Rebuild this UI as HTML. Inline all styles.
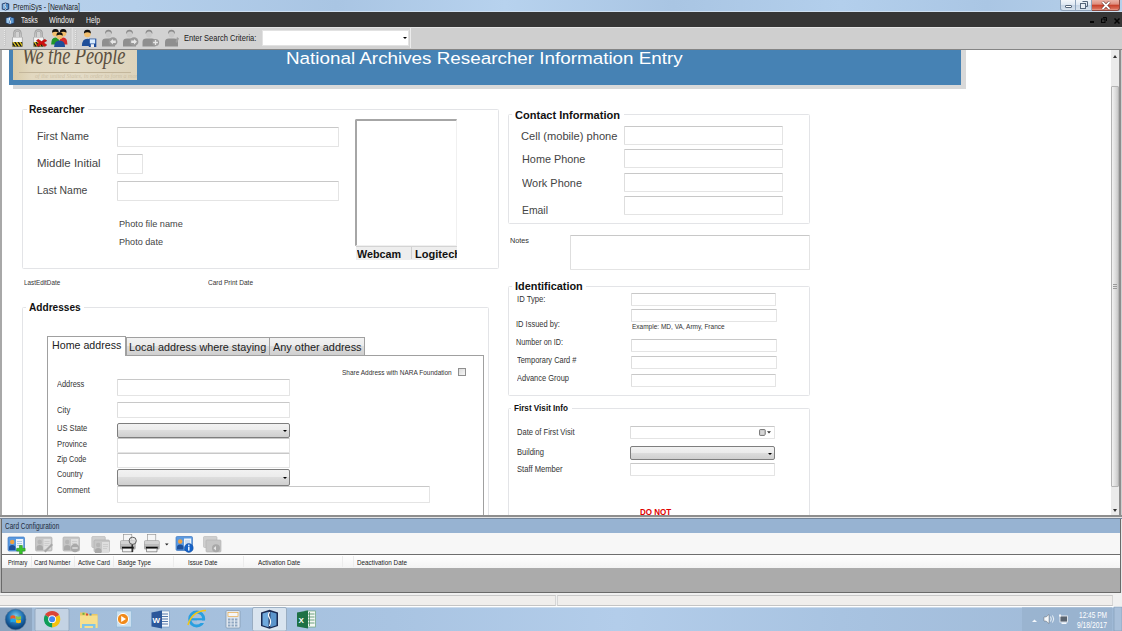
<!DOCTYPE html><html><head><meta charset="utf-8"><style>
html,body{margin:0;padding:0;width:1122px;height:631px;overflow:hidden;background:#fff;position:relative;font-family:'Liberation Sans',sans-serif;}
.r{position:absolute;}
.t{position:absolute;white-space:nowrap;line-height:1;transform-origin:0 0;}
</style></head><body>
<div class="r" style="left:0px;top:0px;width:1122px;height:12px;background:linear-gradient(90deg,#b8d0ea 0%,#b4cfeb 12%,#a9c5e3 30%,#b7d2ee 45%,#a9c5e3 60%,#b3cfec 75%,#aac6e4 88%,#b6d0ea 100%);"></div>
<div class="r" style="left:0px;top:11px;width:1122px;height:1px;background:#cfe0f1;"></div>
<svg class="r" style="left:1px;top:2px" width="9" height="9" viewBox="0 0 9 9"><path d="M0.8 1.8 L4.5 0.4 L8.2 1.8 V7.2 L4.5 8.6 L0.8 7.2Z" fill="#1b2f5c"/><path d="M1.6 2.3 L4.1 1.5 V7.6 L1.6 6.8Z" fill="#7fb3e0"/><path d="M4.9 1.5 L7.4 2.3 V6.8 L4.9 7.6Z" fill="#4d8cc8"/><path d="M4.6 1.4 q-1.2 1.8 0 3.4 q1 1.6 -0.2 3" stroke="#fff" stroke-width="0.9" fill="none"/></svg>
<div class="t" style="left:12.7px;top:2.88px;font-size:8.5px;color:#1e1e1e;transform:scaleX(0.797);">PremiSys - [NewNara]</div>
<div class="r" style="left:1060px;top:0px;width:16px;height:11px;box-sizing:border-box;border:1px solid #8ea3bb;border-top:none;border-radius:0 0 0 3px;background:linear-gradient(#f3f6fa,#dfe8f2 45%,#c7d5e5 55%,#d6e2ee 100%);"></div>
<div class="r" style="left:1076px;top:0px;width:16px;height:11px;box-sizing:border-box;border:1px solid #8ea3bb;border-top:none;border-left:none;background:linear-gradient(#f3f6fa,#dfe8f2 45%,#c7d5e5 55%,#d6e2ee 100%);"></div>
<div class="r" style="left:1092px;top:0px;width:28px;height:11px;box-sizing:border-box;border:1px solid #8d4a40;border-top:none;border-left:none;border-radius:0 0 3px 0;background:linear-gradient(#eab3a7,#e09080 40%,#c8442e 55%,#d86a54 85%,#e9a090 100%);"></div>
<div class="r" style="left:1065px;top:5px;width:7px;height:3px;box-sizing:border-box;border:1px solid #56667a;background:#fff;border-radius:1px;"></div>
<svg class="r" style="left:1080px;top:1px" width="8" height="8" viewBox="0 0 8 8"><path d="M2.5 0.5H7.5V5.5H6" stroke="#56667a" stroke-width="1" fill="none"/><rect x="0.5" y="2.5" width="5" height="5" fill="#e8eef5" stroke="#56667a" stroke-width="1"/></svg>
<svg class="r" style="left:1101px;top:1px" width="10" height="9" viewBox="0 0 10 9"><path d="M1.5 1 L8.5 8 M8.5 1 L1.5 8" stroke="#5a2a22" stroke-width="3"/><path d="M1.5 1 L8.5 8 M8.5 1 L1.5 8" stroke="#ffffff" stroke-width="1.8"/></svg>
<div class="r" style="left:0px;top:12px;width:1122px;height:15px;background:#363636;"></div>
<svg class="r" style="left:4.5px;top:15.5px" width="10" height="9" viewBox="0 0 10 9"><path d="M0.6 1.8 L5 0.3 L9.4 1.8 V7.2 L5 8.7 L0.6 7.2Z" fill="#24406e"/><path d="M1.4 2.3 L4.5 1.4 V7.7 L1.4 6.8Z" fill="#9cc9ee"/><path d="M5.5 1.4 L8.6 2.3 V6.8 L5.5 7.7Z" fill="#5d9ad3"/><path d="M5.1 1.2 q-1.3 1.9 0 3.5 q1.1 1.7 -0.2 3.2" stroke="#fff" stroke-width="1" fill="none"/></svg>
<div class="t" style="left:20.6px;top:16.07px;font-size:8.5px;color:#f0f0f0;transform:scaleX(0.769);">Tasks</div>
<div class="t" style="left:49px;top:16.07px;font-size:8.5px;color:#f0f0f0;transform:scaleX(0.827);">Window</div>
<div class="t" style="left:86px;top:16.07px;font-size:8.5px;color:#f0f0f0;transform:scaleX(0.801);">Help</div>
<div class="r" style="left:1090px;top:21px;width:4px;height:1.5px;background:#050505;"></div>
<svg class="r" style="left:1101px;top:17px" width="6" height="6" viewBox="0 0 6 6"><path d="M2 0.5H5.5V4" stroke="#050505" stroke-width="1" fill="none"/><rect x="0.5" y="2" width="3.5" height="3.5" fill="none" stroke="#050505" stroke-width="1"/></svg>
<svg class="r" style="left:1114px;top:17.5px" width="6" height="6" viewBox="0 0 6 6"><path d="M0.5 0.5L5.5 5.5M5.5 0.5L0.5 5.5" stroke="#050505" stroke-width="1.5"/></svg>
<div class="r" style="left:0px;top:27px;width:1122px;height:23px;background:#cfcfcf;border-top:1px solid #e4e4e4;box-sizing:border-box;"></div>
<div class="r" style="left:0px;top:49px;width:1122px;height:1px;background:#858585;"></div>
<div class="r" style="left:0px;top:28px;width:410px;height:21px;background:#d2d2d2;"></div>
<div class="r" style="left:410px;top:28px;width:1px;height:20px;background:#ececec;"></div>
<svg class="r" style="left:0px;top:27px" width="260" height="23" viewBox="0 27 260 23"><rect x="4" y="30" width="1" height="1" fill="#f4f4f4"/><rect x="4.5" y="30.5" width="1" height="1" fill="#9a9a9a" opacity=".5"/><rect x="4" y="32" width="1" height="1" fill="#f4f4f4"/><rect x="4.5" y="32.5" width="1" height="1" fill="#9a9a9a" opacity=".5"/><rect x="4" y="34" width="1" height="1" fill="#f4f4f4"/><rect x="4.5" y="34.5" width="1" height="1" fill="#9a9a9a" opacity=".5"/><rect x="4" y="36" width="1" height="1" fill="#f4f4f4"/><rect x="4.5" y="36.5" width="1" height="1" fill="#9a9a9a" opacity=".5"/><rect x="4" y="38" width="1" height="1" fill="#f4f4f4"/><rect x="4.5" y="38.5" width="1" height="1" fill="#9a9a9a" opacity=".5"/><rect x="4" y="40" width="1" height="1" fill="#f4f4f4"/><rect x="4.5" y="40.5" width="1" height="1" fill="#9a9a9a" opacity=".5"/><rect x="4" y="42" width="1" height="1" fill="#f4f4f4"/><rect x="4.5" y="42.5" width="1" height="1" fill="#9a9a9a" opacity=".5"/><rect x="4" y="44" width="1" height="1" fill="#f4f4f4"/><rect x="4.5" y="44.5" width="1" height="1" fill="#9a9a9a" opacity=".5"/><rect x="75" y="30" width="1" height="1" fill="#f4f4f4"/><rect x="75.5" y="30.5" width="1" height="1" fill="#9a9a9a" opacity=".5"/><rect x="75" y="32" width="1" height="1" fill="#f4f4f4"/><rect x="75.5" y="32.5" width="1" height="1" fill="#9a9a9a" opacity=".5"/><rect x="75" y="34" width="1" height="1" fill="#f4f4f4"/><rect x="75.5" y="34.5" width="1" height="1" fill="#9a9a9a" opacity=".5"/><rect x="75" y="36" width="1" height="1" fill="#f4f4f4"/><rect x="75.5" y="36.5" width="1" height="1" fill="#9a9a9a" opacity=".5"/><rect x="75" y="38" width="1" height="1" fill="#f4f4f4"/><rect x="75.5" y="38.5" width="1" height="1" fill="#9a9a9a" opacity=".5"/><rect x="75" y="40" width="1" height="1" fill="#f4f4f4"/><rect x="75.5" y="40.5" width="1" height="1" fill="#9a9a9a" opacity=".5"/><rect x="75" y="42" width="1" height="1" fill="#f4f4f4"/><rect x="75.5" y="42.5" width="1" height="1" fill="#9a9a9a" opacity=".5"/><rect x="75" y="44" width="1" height="1" fill="#f4f4f4"/><rect x="75.5" y="44.5" width="1" height="1" fill="#9a9a9a" opacity=".5"/><rect x="71.5" y="28" width="1" height="21" fill="#ececec"/><rect x="70.5" y="28" width="1" height="21" fill="#c6c6c6"/>
<path d="M14.3 38 V33.6 Q14.3 30.4 17.4 30.4 Q20.5 30.4 20.5 33.6 V38" fill="none" stroke="#9c9c9c" stroke-width="2.3"/>
<path d="M14.3 38 V33.6 Q14.3 30.4 17.4 30.4 Q20.5 30.4 20.5 33.6 V38" fill="none" stroke="#d4d4d4" stroke-width="0.7"/>
<rect x="12" y="37" width="10.8" height="9.8" rx="0.6" fill="#a9a9a9"/>
<rect x="12.9" y="37.5" width="9" height="4.6" fill="#f3f3f3"/>
<rect x="12.5" y="42.1" width="9.8" height="4.5" fill="#141414"/>
<path d="M12.5 42.1 h1.6 l3 4.5 h-1.6 l-3 -4.5z M15.7 42.1 h1.7 l3 4.5 h-1.7z M19 42.1 h1.7 l1.6 2.4 v2.1 h-0.3z M12.5 44.5 l1.4 2.1 h-1.4z" fill="#dcc423"/>

<path d="M35.5 38 V33.6 Q35.5 30.4 38.6 30.4 Q41.7 30.4 41.7 33.6 V38" fill="none" stroke="#9c9c9c" stroke-width="2.3"/>
<path d="M35.5 38 V33.6 Q35.5 30.4 38.6 30.4 Q41.7 30.4 41.7 33.6 V38" fill="none" stroke="#d4d4d4" stroke-width="0.7"/>
<rect x="33.2" y="37" width="10.8" height="9.8" rx="0.6" fill="#a9a9a9"/>
<rect x="34.1" y="37.5" width="9" height="4.6" fill="#f3f3f3"/>
<rect x="33.7" y="42.1" width="9.8" height="4.5" fill="#141414"/>
<path d="M33.7 42.1 h1.6 l3 4.5 h-1.6 l-3 -4.5z M36.900000000000006 42.1 h1.7 l3 4.5 h-1.7z M40.2 42.1 h1.7 l1.6 2.4 v2.1 h-0.3z M33.7 44.5 l1.4 2.1 h-1.4z" fill="#dcc423"/>
<path d="M38.2 39.3 L41.5 41.5 L44.800000000000004 39.3 L46.800000000000004 40.8 L43.800000000000004 42.7 L46.800000000000004 45 L44.800000000000004 46.6 L41.5 44.2 L38.2 46.6 L36.400000000000006 45 L39.300000000000004 42.7 L36.400000000000006 40.8Z" fill="#d01010" stroke="#a00808" stroke-width="0.5" stroke-linejoin="round"/><path d="M51.15 44.55 Q51.15 37.620000000000005 55.4 37.620000000000005 Q59.65 37.620000000000005 59.65 44.55Z" fill="#21962a"/>
<ellipse cx="55.4" cy="33.0" rx="3.19" ry="3.4100000000000006" fill="#f2bf6e"/>
<path d="M52.1 32.67 Q51.879999999999995 28.82 55.4 29.04 Q58.92 28.82 58.699999999999996 32.67 Q55.4 30.58 52.1 32.67Z" fill="#111"/><path d="M58.95 44.55 Q58.95 37.620000000000005 63.2 37.620000000000005 Q67.45 37.620000000000005 67.45 44.55Z" fill="#d42a2a"/>
<ellipse cx="63.2" cy="33.0" rx="3.19" ry="3.4100000000000006" fill="#f2bf6e"/>
<path d="M59.900000000000006 32.67 Q59.68 28.82 63.2 29.04 Q66.72 28.82 66.5 32.67 Q63.2 30.58 59.900000000000006 32.67Z" fill="#111"/><path d="M54.1 47.025 Q54.1 40.41 59.6 40.41 Q65.1 40.41 65.1 47.025Z" fill="#1f4f9a"/>
<ellipse cx="59.6" cy="36.0" rx="3.045" ry="3.2550000000000003" fill="#f2bf6e"/>
<path d="M56.45 35.685 Q56.24 32.01 59.6 32.22 Q62.96 32.01 62.75 35.685 Q59.6 33.69 56.45 35.685Z" fill="#111"/><path d="M81.9 45.875 Q81.9 38.629999999999995 87.4 38.629999999999995 Q92.9 38.629999999999995 92.9 45.875Z" fill="#1f4f9a"/>
<ellipse cx="87.4" cy="33.8" rx="3.3349999999999995" ry="3.565" fill="#f2bf6e"/>
<path d="M83.95 33.455 Q83.72 29.43 87.4 29.659999999999997 Q91.08000000000001 29.43 90.85000000000001 33.455 Q87.4 31.269999999999996 83.95 33.455Z" fill="#111"/><rect x="88.8" y="38.6" width="7.5" height="8.4" fill="#1c4c9c"/><rect x="89.8" y="39.3" width="5.4" height="4.2" fill="#d8ecff"/><rect x="90.8" y="44.2" width="3.2" height="2.8" fill="#f0f0f0"/><path d="M105 33.8 Q105 29.8 108.5 29.8 Q112 29.8 112 33.8 Q108.5 31.8 105 33.8Z" fill="#8c8c8c"/>
<ellipse cx="108.5" cy="34.5" rx="2.8" ry="3" fill="#c9c9c9"/>
<path d="M102 46.5 V42 Q102 38.6 106 38.6 H111 Q115 38.6 115 42 V46.5Z" fill="#8f8f8f"/><circle cx="113" cy="41.7" r="4.4" fill="#9a9a9a"/><path d="M110 41.7 L113 38.900000000000006 V40.5 H115.8 V42.900000000000006 H113 V44.5Z" fill="#e6e6e6"/><path d="M126 33.8 Q126 29.8 129.5 29.8 Q133 29.8 133 33.8 Q129.5 31.8 126 33.8Z" fill="#8c8c8c"/>
<ellipse cx="129.5" cy="34.5" rx="2.8" ry="3" fill="#c9c9c9"/>
<path d="M123 46.5 V42 Q123 38.6 127 38.6 H132 Q136 38.6 136 42 V46.5Z" fill="#8f8f8f"/><circle cx="134" cy="41.7" r="4.4" fill="#9a9a9a"/><path d="M137 41.7 L134 38.900000000000006 V40.5 H131.2 V42.900000000000006 H134 V44.5Z" fill="#e6e6e6"/><path d="M145.5 33.8 Q145.5 29.8 149.0 29.8 Q152.5 29.8 152.5 33.8 Q149.0 31.8 145.5 33.8Z" fill="#8c8c8c"/>
<ellipse cx="149.0" cy="34.5" rx="2.8" ry="3" fill="#c9c9c9"/>
<path d="M142.5 46.5 V42 Q142.5 38.6 146.5 38.6 H151.5 Q155.5 38.6 155.5 42 V46.5Z" fill="#8f8f8f"/><circle cx="155.5" cy="42.5" r="3.6" fill="#9a9a9a"/><path d="M153.1 42.5H157.9M155.5 40.1V44.9" stroke="#e6e6e6" stroke-width="1.3"/><path d="M168 33.8 Q168 29.8 171.5 29.8 Q175 29.8 175 33.8 Q171.5 31.8 168 33.8Z" fill="#8c8c8c"/>
<ellipse cx="171.5" cy="34.5" rx="2.8" ry="3" fill="#c9c9c9"/>
<path d="M165 46.5 V42 Q165 38.6 169 38.6 H174 Q178 38.6 178 42 V46.5Z" fill="#8f8f8f"/><path d="M177 37 L179 38.5 L177 43 L175.5 42Z" fill="#a0a0a0"/></svg>
<div class="t" style="left:184.3px;top:34.37px;font-size:8.5px;color:#1a1a1a;transform:scaleX(0.885);">Enter Search Criteria:</div>
<div class="r" style="left:262px;top:30px;width:147px;height:16px;background:#fff;border:1px solid #e2e2e2;border-top-width:1.5px;box-sizing:border-box;"></div>
<div class="r" style="left:402.7px;top:37px;width:0;height:0;border-left:2px solid transparent;border-right:2px solid transparent;border-top:2.4px solid #000;"></div>
<div class="r" style="left:0px;top:50px;width:2px;height:467px;background:#a8a8a8;"></div>
<div class="r" style="left:1119px;top:50px;width:2px;height:467px;background:#8e8e8e;"></div>
<div class="r" style="left:1121px;top:50px;width:1px;height:467px;background:#cfcfcf;"></div>
<div class="r" style="left:13px;top:50px;width:953px;height:39px;background:#d9d9d9;"></div>
<div class="r" style="left:9px;top:50px;width:952px;height:35px;background:#4682b4;"></div>
<div class="r" style="left:13px;top:50px;width:124px;height:30px;overflow:hidden;background:linear-gradient(90deg,#d9cca9 0%,#e2d8c0 15%,#e4dcc8 50%,#ddd3bb 100%);"><div class="t" style="left:9px;top:-7px;font-family:'Liberation Serif',serif;font-style:italic;font-size:25px;color:#5c5040;transform:scaleX(0.74);letter-spacing:-0.2px;">We the People</div><div class="r" style="left:6px;top:22px;width:112px;height:1px;background:#c4b79c;"></div><div class="t" style="left:22px;top:23px;font-family:'Liberation Serif',serif;font-style:italic;font-size:6px;color:#cdc1a6;">of the united States, in order to form a more perfect</div></div>
<div class="t" style="left:286px;top:49.81px;font-size:17.4px;color:#ffffff;transform:scaleX(1.083);">National Archives Researcher Information Entry</div>
<div class="r" style="left:1111px;top:50px;width:8px;height:467px;background:#ebebeb;"></div>
<div class="r" style="left:1111px;top:86px;width:8px;height:401px;box-sizing:border-box;border:1px solid #b4b4b4;border-radius:1px;background:linear-gradient(90deg,#f2f2f2,#dcdcdc 60%,#c8c8c8);"></div>
<div class="r" style="left:1112.5px;top:55px;width:0;height:0;border-left:2.5px solid transparent;border-right:2.5px solid transparent;border-bottom:3px solid #333;"></div>
<div class="r" style="left:1112.5px;top:509px;width:0;height:0;border-left:2.5px solid transparent;border-right:2.5px solid transparent;border-top:3px solid #333;"></div>
<div class="r" style="left:1113px;top:284px;width:4px;height:5px;background:repeating-linear-gradient(#9a9a9a 0 1px,transparent 1px 2px);"></div>
<div class="r" style="left:22px;top:109px;width:477px;height:160px;box-sizing:border-box;border:1px solid #e3e4e7;border-radius:1.5px;"></div>
<div class="r" style="left:27px;top:104px;width:61px;height:10px;background:#fff;"></div>
<div class="t" style="left:29px;top:103.75px;font-size:11px;color:#111;font-weight:bold;transform:scaleX(0.926);">Researcher</div>
<div class="t" style="left:37px;top:131.11px;font-size:11.4px;color:#444;transform:scaleX(0.933);">First Name</div>
<div class="t" style="left:37px;top:157.81px;font-size:11.4px;color:#444;transform:scaleX(1.005);">Middle Initial</div>
<div class="t" style="left:37px;top:185.11px;font-size:11.4px;color:#444;transform:scaleX(0.914);">Last Name</div>
<div class="r" style="left:117px;top:127px;width:222px;height:20px;box-sizing:border-box;background:#fff;border:1px solid #e4e4e4;border-top-color:#c8c8c8;border-left-color:#dedede;border-radius:1px;"></div>
<div class="r" style="left:117px;top:154px;width:26px;height:20px;box-sizing:border-box;background:#fff;border:1px solid #e4e4e4;border-top-color:#c8c8c8;border-left-color:#dedede;border-radius:1px;"></div>
<div class="r" style="left:117px;top:181px;width:222px;height:20px;box-sizing:border-box;background:#fff;border:1px solid #e4e4e4;border-top-color:#c8c8c8;border-left-color:#dedede;border-radius:1px;"></div>
<div class="t" style="left:119.2px;top:219.07px;font-size:9.8px;color:#444;transform:scaleX(0.937);">Photo file name</div>
<div class="t" style="left:119.2px;top:237.47px;font-size:9.8px;color:#444;transform:scaleX(0.928);">Photo date</div>
<div class="r" style="left:355px;top:119px;width:102px;height:127px;box-sizing:border-box;background:#fff;border:1px solid #f0f0f0;border-left:2px solid #a6a6a6;border-top:2px solid #a6a6a6;border-radius:2px 0 0 0;"></div>
<div class="r" style="left:356px;top:246px;width:101px;height:14px;background:#eeeeee;"></div>
<div class="r" style="left:356px;top:246px;width:101px;height:1px;background:#d4d4d4;"></div>
<div class="r" style="left:411px;top:247px;width:1px;height:12px;background:#d0d0d0;"></div>
<div class="r" style="left:355px;top:246px;width:102px;height:14px;overflow:hidden;">
<div class="t" style="left:2px;top:3.45px;font-size:11px;color:#111;font-weight:bold;transform:scaleX(0.977);">Webcam</div>
<div class="t" style="left:60px;top:3.45px;font-size:11px;color:#111;font-weight:bold;transform:scaleX(1.004);">Logitech</div>
</div>
<div class="t" style="left:23.8px;top:279.23px;font-size:7.5px;color:#333;transform:scaleX(0.843);">LastEditDate</div>
<div class="t" style="left:207.7px;top:279.03px;font-size:7.5px;color:#333;transform:scaleX(0.871);">Card Print Date</div>
<div class="r" style="left:508px;top:114px;width:302px;height:110px;box-sizing:border-box;border:1px solid #e3e4e7;border-radius:1.5px;"></div>
<div class="r" style="left:512px;top:108px;width:112px;height:10px;background:#fff;"></div>
<div class="t" style="left:515.4px;top:109.95px;font-size:11px;color:#111;font-weight:bold;transform:scaleX(1.005);">Contact Information</div>
<div class="t" style="left:521.4px;top:131.11px;font-size:11.4px;color:#444;transform:scaleX(0.977);">Cell (mobile) phone</div>
<div class="t" style="left:521.6px;top:153.91px;font-size:11.4px;color:#444;transform:scaleX(0.953);">Home Phone</div>
<div class="t" style="left:521.6px;top:177.61px;font-size:11.4px;color:#444;transform:scaleX(0.960);">Work Phone</div>
<div class="t" style="left:521.6px;top:204.81px;font-size:11.4px;color:#444;transform:scaleX(0.912);">Email</div>
<div class="r" style="left:624px;top:126px;width:159px;height:19px;box-sizing:border-box;background:#fff;border:1px solid #e4e4e4;border-top-color:#c8c8c8;border-left-color:#dedede;border-radius:1px;"></div>
<div class="r" style="left:624px;top:149px;width:159px;height:19px;box-sizing:border-box;background:#fff;border:1px solid #e4e4e4;border-top-color:#c8c8c8;border-left-color:#dedede;border-radius:1px;"></div>
<div class="r" style="left:624px;top:173px;width:159px;height:19px;box-sizing:border-box;background:#fff;border:1px solid #e4e4e4;border-top-color:#c8c8c8;border-left-color:#dedede;border-radius:1px;"></div>
<div class="r" style="left:624px;top:196px;width:159px;height:19px;box-sizing:border-box;background:#fff;border:1px solid #e4e4e4;border-top-color:#c8c8c8;border-left-color:#dedede;border-radius:1px;"></div>
<div class="t" style="left:509.9px;top:237.43px;font-size:7.5px;color:#333;transform:scaleX(0.970);">Notes</div>
<div class="r" style="left:570px;top:235px;width:240px;height:35px;box-sizing:border-box;background:#fff;border:1px solid #e4e4e4;border-top-color:#c8c8c8;border-left-color:#dedede;border-radius:1px;"></div>
<div class="r" style="left:508px;top:286px;width:302px;height:110px;box-sizing:border-box;border:1px solid #e3e4e7;border-radius:1.5px;"></div>
<div class="r" style="left:512px;top:279px;width:74px;height:13px;background:#fff;"></div>
<div class="t" style="left:514.6px;top:281.03px;font-size:11.5px;color:#111;font-weight:bold;transform:scaleX(0.947);">Identification</div>
<div class="t" style="left:516.5px;top:295.83px;font-size:8.2px;color:#333;transform:scaleX(0.938);">ID Type:</div>
<div class="t" style="left:516px;top:321.13px;font-size:8.2px;color:#333;transform:scaleX(0.915);">ID Issued by:</div>
<div class="t" style="left:516px;top:338.53px;font-size:8.2px;color:#333;transform:scaleX(0.881);">Number on ID:</div>
<div class="t" style="left:516.8px;top:356.63px;font-size:8.2px;color:#333;transform:scaleX(0.907);">Temporary Card #</div>
<div class="t" style="left:516.8px;top:374.63px;font-size:8.2px;color:#333;transform:scaleX(0.913);">Advance Group</div>
<div class="r" style="left:631px;top:293px;width:145px;height:13px;box-sizing:border-box;background:#fff;border:1px solid #e4e4e4;border-top-color:#c8c8c8;border-left-color:#dedede;border-radius:1px;"></div>
<div class="r" style="left:631px;top:309px;width:146px;height:13px;box-sizing:border-box;background:#fff;border:1px solid #e4e4e4;border-top-color:#c8c8c8;border-left-color:#dedede;border-radius:1px;"></div>
<div class="t" style="left:632.4px;top:323.43px;font-size:7.5px;color:#333;transform:scaleX(0.867);">Example: MD, VA, Army, France</div>
<div class="r" style="left:631px;top:339px;width:146px;height:13px;box-sizing:border-box;background:#fff;border:1px solid #e4e4e4;border-top-color:#c8c8c8;border-left-color:#dedede;border-radius:1px;"></div>
<div class="r" style="left:631px;top:356px;width:146px;height:13px;box-sizing:border-box;background:#fff;border:1px solid #e4e4e4;border-top-color:#c8c8c8;border-left-color:#dedede;border-radius:1px;"></div>
<div class="r" style="left:631px;top:374px;width:145px;height:13px;box-sizing:border-box;background:#fff;border:1px solid #e4e4e4;border-top-color:#c8c8c8;border-left-color:#dedede;border-radius:1px;"></div>
<div class="r" style="left:508px;top:408px;width:302px;height:152px;box-sizing:border-box;border:1px solid #e3e4e7;border-radius:1.5px;"></div>
<div class="r" style="left:511px;top:403px;width:61px;height:10px;background:#fff;"></div>
<div class="t" style="left:513.9px;top:404.35px;font-size:9px;color:#111;font-weight:bold;transform:scaleX(0.902);">First Visit Info</div>
<div class="t" style="left:516.7px;top:428.83px;font-size:8.2px;color:#333;transform:scaleX(0.925);">Date of First Visit</div>
<div class="t" style="left:516.7px;top:449.23px;font-size:8.2px;color:#333;transform:scaleX(0.925);">Building</div>
<div class="t" style="left:516.7px;top:466.03px;font-size:8.2px;color:#333;transform:scaleX(0.931);">Staff Member</div>
<div class="r" style="left:630px;top:426px;width:145px;height:13px;box-sizing:border-box;background:#fff;border:1px solid #e4e4e4;border-top-color:#c8c8c8;border-left-color:#dedede;border-radius:1px;"></div>
<svg class="r" style="left:759px;top:429px" width="13" height="8" viewBox="0 0 13 8"><path d="M0.6 1.2Q0.6 0.6 1.2 0.6H5.6Q6.2 0.6 6.2 1.2V5.6L5.2 6.4H1.2Q0.6 6.4 0.6 5.8Z" fill="#d6d6d6" stroke="#707070" stroke-width="1"/><path d="M8 2.2H12L10 4.4Z" fill="#333"/></svg>
<div class="r" style="left:630px;top:446px;width:145px;height:14px;box-sizing:border-box;border:1px solid #7e7e7e;border-radius:2px;background:linear-gradient(#f2f2f2 0%,#ebebeb 50%,#dddddd 50%,#cfcfcf 100%);"></div>
<div class="r" style="left:767.5px;top:452.5px;width:0;height:0;border-left:2.2px solid transparent;border-right:2.2px solid transparent;border-top:2.6px solid #000;"></div>
<div class="r" style="left:630px;top:463px;width:145px;height:13px;box-sizing:border-box;background:#fff;border:1px solid #e4e4e4;border-top-color:#c8c8c8;border-left-color:#dedede;border-radius:1px;"></div>
<div class="t" style="left:640px;top:507.95px;font-size:9px;color:#e00000;font-weight:bold;transform:scaleX(0.894);">DO NOT</div>
<div class="r" style="left:22px;top:307px;width:467px;height:253px;box-sizing:border-box;border:1px solid #e3e4e7;border-radius:1.5px;"></div>
<div class="r" style="left:26px;top:300px;width:58px;height:14px;background:#fff;"></div>
<div class="t" style="left:29px;top:302.05px;font-size:11px;color:#111;font-weight:bold;transform:scaleX(0.919);">Addresses</div>
<div class="r" style="left:47px;top:355px;width:437px;height:205px;box-sizing:border-box;border:1px solid #a0a0a0;background:#fff;"></div>
<div class="r" style="left:126px;top:337px;width:144px;height:18px;box-sizing:border-box;border:1px solid #a0a0a0;border-bottom:none;background:linear-gradient(#f2f2f2,#ebebeb 50%,#dddddd 50%,#cfcfcf);"></div>
<div class="r" style="left:269px;top:337px;width:96px;height:18px;box-sizing:border-box;border:1px solid #a0a0a0;border-bottom:none;background:linear-gradient(#f2f2f2,#ebebeb 50%,#dddddd 50%,#cfcfcf);"></div>
<div class="r" style="left:47px;top:336px;width:79px;height:20px;box-sizing:border-box;border:1px solid #a0a0a0;border-bottom:none;background:#fff;"></div>
<div class="t" style="left:51.8px;top:340.41px;font-size:11.4px;color:#222;transform:scaleX(0.936);">Home address</div>
<div class="t" style="left:128.8px;top:341.61px;font-size:11.4px;color:#222;transform:scaleX(0.950);">Local address where staying</div>
<div class="t" style="left:273.4px;top:341.61px;font-size:11.4px;color:#222;transform:scaleX(0.958);">Any other address</div>
<div class="t" style="left:342px;top:369.14px;font-size:7.6px;color:#333;transform:scaleX(0.855);">Share Address with NARA Foundation</div>
<div class="r" style="left:458px;top:368px;width:8px;height:8px;box-sizing:border-box;border:1px solid #8f8f8f;background:linear-gradient(135deg,#dcdcdc,#f6f6f6);"></div>
<div class="t" style="left:57px;top:381.03px;font-size:8.2px;color:#333;transform:scaleX(0.908);">Address</div>
<div class="t" style="left:56.5px;top:407.43px;font-size:8.2px;color:#333;transform:scaleX(0.942);">City</div>
<div class="t" style="left:56.5px;top:424.73px;font-size:8.2px;color:#333;transform:scaleX(0.923);">US State</div>
<div class="t" style="left:56.5px;top:440.83px;font-size:8.2px;color:#333;transform:scaleX(0.940);">Province</div>
<div class="t" style="left:56.5px;top:455.73px;font-size:8.2px;color:#333;transform:scaleX(0.884);">Zip Code</div>
<div class="t" style="left:56.5px;top:470.63px;font-size:8.2px;color:#333;transform:scaleX(0.906);">Country</div>
<div class="t" style="left:56.5px;top:486.73px;font-size:8.2px;color:#333;transform:scaleX(0.923);">Comment</div>
<div class="r" style="left:117px;top:379px;width:173px;height:17px;box-sizing:border-box;background:#fff;border:1px solid #e4e4e4;border-top-color:#c8c8c8;border-left-color:#dedede;border-radius:1px;"></div>
<div class="r" style="left:117px;top:402px;width:173px;height:16px;box-sizing:border-box;background:#fff;border:1px solid #e4e4e4;border-top-color:#c8c8c8;border-left-color:#dedede;border-radius:1px;"></div>
<div class="r" style="left:117px;top:423px;width:173px;height:15px;box-sizing:border-box;border:1px solid #7e7e7e;border-radius:2px;background:linear-gradient(#f2f2f2 0%,#ebebeb 50%,#dddddd 50%,#cfcfcf 100%);"></div>
<div class="r" style="left:282.5px;top:430.0px;width:0;height:0;border-left:2.2px solid transparent;border-right:2.2px solid transparent;border-top:2.6px solid #000;"></div>
<div class="r" style="left:117px;top:438px;width:173px;height:15px;box-sizing:border-box;background:#fff;border:1px solid #e4e4e4;border-top-color:#c8c8c8;border-left-color:#dedede;border-radius:1px;"></div>
<div class="r" style="left:117px;top:453px;width:173px;height:15px;box-sizing:border-box;background:#fff;border:1px solid #e4e4e4;border-top-color:#c8c8c8;border-left-color:#dedede;border-radius:1px;"></div>
<div class="r" style="left:117px;top:469px;width:173px;height:17px;box-sizing:border-box;border:1px solid #7e7e7e;border-radius:2px;background:linear-gradient(#f2f2f2 0%,#ebebeb 50%,#dddddd 50%,#cfcfcf 100%);"></div>
<div class="r" style="left:282.5px;top:477.0px;width:0;height:0;border-left:2.2px solid transparent;border-right:2.2px solid transparent;border-top:2.6px solid #000;"></div>
<div class="r" style="left:117px;top:486px;width:313px;height:17px;box-sizing:border-box;background:#fff;border:1px solid #e4e4e4;border-top-color:#c8c8c8;border-left-color:#dedede;border-radius:1px;"></div>
<div class="r" style="left:0px;top:515px;width:1122px;height:2px;background:#8e8e8e;"></div>
<div class="r" style="left:0px;top:517px;width:1122px;height:1px;background:#e6e6e6;"></div>
<div class="r" style="left:0px;top:518px;width:1122px;height:1px;background:#74859a;"></div>
<div class="r" style="left:0px;top:519px;width:1121px;height:74px;background:#6a6a6a;"></div>
<div class="r" style="left:1121px;top:519px;width:1px;height:87px;background:#e8e8e8;"></div>
<div class="r" style="left:0px;top:519px;width:1px;height:74px;background:#b4b4b4;"></div>
<div class="r" style="left:2px;top:519px;width:1118px;height:14px;background:#97b3d2;"></div>
<div class="t" style="left:4.8px;top:523.13px;font-size:8.2px;color:#1e2a3a;transform:scaleX(0.789);">Card Configuration</div>
<div class="r" style="left:2px;top:533px;width:1118px;height:21px;background:#f7f7f7;"></div>
<div class="r" style="left:2px;top:554px;width:1118px;height:1px;background:#6e6e6e;"></div>
<div class="r" style="left:2px;top:555px;width:1118px;height:13px;background:linear-gradient(#ffffff,#f3f3f3);"></div>
<svg class="r" style="left:0px;top:533px" width="230" height="21" viewBox="0 533 230 21"><rect x="8" y="537" width="16.5" height="14" rx="1.2" fill="#5b9ae0" stroke="#3f78c0" stroke-width="0.7"/><rect x="16" y="539" width="7.2" height="10.5" fill="#eef4fb"/><path d="M17 541.5H22 M17 543.5H22 M17 545.5H21" stroke="#3f78c0" stroke-width="0.6" opacity=".6"/><circle cx="12.2" cy="542" r="2.2" fill="#f0a040"/><path d="M9 550 V547.5 Q9 545 12.2 545 Q15.4 545 15.4 547.5 V550Z" fill="#1d4f9b"/><path d="M19.5 545.5h2.8v2.8h2.8v2.8h-2.8v2.8h-2.8v-2.8h-2.8v-2.8h2.8z" fill="#39c22d" stroke="#2a8f22" stroke-width="0.6"/><rect x="35.5" y="537" width="16.5" height="14" rx="1.2" fill="#c6c6c6" stroke="#b0b0b0" stroke-width="0.7"/><rect x="43.5" y="539" width="7.2" height="10.5" fill="#dedede"/><path d="M44.5 541.5H49.5 M44.5 543.5H49.5 M44.5 545.5H48.5" stroke="#b0b0b0" stroke-width="0.6" opacity=".6"/><circle cx="39.7" cy="542" r="2.2" fill="#b5b5b5"/><path d="M36.5 550 V547.5 Q36.5 545 39.7 545 Q42.9 545 42.9 547.5 V550Z" fill="#a9a9a9"/><path d="M44 551 L51.5 543.5 L53 545 L45.5 552.5Z" fill="#a8a8a8"/><rect x="63" y="537" width="16.5" height="14" rx="1.2" fill="#c6c6c6" stroke="#b0b0b0" stroke-width="0.7"/><rect x="71" y="539" width="7.2" height="10.5" fill="#dedede"/><path d="M72 541.5H77 M72 543.5H77 M72 545.5H76" stroke="#b0b0b0" stroke-width="0.6" opacity=".6"/><circle cx="67.2" cy="542" r="2.2" fill="#b5b5b5"/><path d="M64 550 V547.5 Q64 545 67.2 545 Q70.4 545 70.4 547.5 V550Z" fill="#a9a9a9"/><circle cx="75" cy="548" r="4.3" fill="#a9a9a9"/><rect x="72.3" y="547.3" width="5.4" height="1.4" fill="#e2e2e2"/><rect x="91.8" y="536.5" width="13.5" height="11" rx="1" fill="#cfcfcf" stroke="#b5b5b5" stroke-width="0.6"/><rect x="94" y="540" width="15.5" height="12" rx="1.2" fill="#c6c6c6" stroke="#b0b0b0" stroke-width="0.7"/><rect x="102" y="542" width="7.2" height="10.5" fill="#dedede"/><path d="M103 544.5H108 M103 546.5H108 M103 548.5H107" stroke="#b0b0b0" stroke-width="0.6" opacity=".6"/><circle cx="98.2" cy="545" r="2.2" fill="#b5b5b5"/><path d="M95 553 V550.5 Q95 548 98.2 548 Q101.4 548 101.4 550.5 V553Z" fill="#a9a9a9"/><rect x="123.3" y="534.3" width="8.5" height="6.8" fill="#f6f6f6" stroke="#8c8c8c" stroke-width="0.6"/><rect x="120" y="540.3" width="15.7" height="9.2" rx="1.6" fill="#a9a9a9"/><rect x="120.7" y="541" width="14.3" height="3.2" rx="1" fill="#d2d2d2"/><rect x="120.7" y="544.5" width="14.3" height="1.3" fill="#c4c4c4"/><rect x="122" y="546.8" width="11.7" height="1.9" fill="#0c0c0c"/><path d="M122.5 548.7 V551.8 H133 V548.7" fill="#f2f2f2" stroke="#555" stroke-width="0.6"/><circle cx="132.7" cy="540.8" r="3.6" fill="#e0e0e0" fill-opacity=".6" stroke="#5f5f5f" stroke-width="1"/><path d="M132.2 544.4 L132.2 552" stroke="#1a1a1a" stroke-width="1.3"/><rect x="147.3" y="534.3" width="8.5" height="6.8" fill="#f6f6f6" stroke="#8c8c8c" stroke-width="0.6"/><rect x="144" y="540.3" width="15.7" height="9.2" rx="1.6" fill="#a9a9a9"/><rect x="144.7" y="541" width="14.3" height="3.2" rx="1" fill="#d2d2d2"/><rect x="144.7" y="544.5" width="14.3" height="1.3" fill="#c4c4c4"/><rect x="146" y="546.8" width="11.7" height="1.9" fill="#0c0c0c"/><path d="M146.5 548.7 V551.8 H157 V548.7" fill="#f2f2f2" stroke="#555" stroke-width="0.6"/><path d="M165 543.6h3.6l-1.8 1.8z" fill="#222"/><rect x="176" y="536.5" width="16.5" height="14" rx="1.2" fill="#5b9ae0" stroke="#3f78c0" stroke-width="0.7"/><rect x="184" y="538.5" width="7.2" height="10.5" fill="#eef4fb"/><path d="M185 541.0H190 M185 543.0H190 M185 545.0H189" stroke="#3f78c0" stroke-width="0.6" opacity=".6"/><circle cx="180.2" cy="541.5" r="2.2" fill="#f0a040"/><path d="M177 549.5 V547.0 Q177 544.5 180.2 544.5 Q183.4 544.5 183.4 547.0 V549.5Z" fill="#1d4f9b"/><circle cx="188.8" cy="548" r="4.4" fill="#1462c8" stroke="#0d4594" stroke-width="0.5"/><rect x="188.1" y="546.6" width="1.4" height="4" fill="#fff"/><rect x="188.1" y="544.6" width="1.4" height="1.3" fill="#fff"/><rect x="203.5" y="536.5" width="13.5" height="11" rx="1" fill="#cfcfcf" stroke="#b5b5b5" stroke-width="0.6"/><rect x="206" y="540" width="15" height="12" rx="1" fill="#c6c6c6" stroke="#b0b0b0" stroke-width="0.6"/><circle cx="216" cy="548.2" r="4" fill="#a9a9a9"/><path d="M213.5 548.2 L216 546 V550.4Z" fill="#e6e6e6"/></svg>
<div class="r" style="left:31px;top:556px;width:1px;height:11px;background:#ececec;"></div>
<div class="r" style="left:74px;top:556px;width:1px;height:11px;background:#ececec;"></div>
<div class="r" style="left:113px;top:556px;width:1px;height:11px;background:#ececec;"></div>
<div class="r" style="left:172.8px;top:556px;width:1.0px;height:11px;background:#ececec;"></div>
<div class="r" style="left:243px;top:556px;width:1px;height:11px;background:#ececec;"></div>
<div class="r" style="left:342px;top:556px;width:1px;height:11px;background:#ececec;"></div>
<div class="r" style="left:353px;top:556px;width:1px;height:11px;background:#ececec;"></div>
<div class="t" style="left:7.6px;top:558.88px;font-size:7.2px;color:#222;transform:scaleX(0.782);">Primary</div>
<div class="t" style="left:34px;top:558.88px;font-size:7.2px;color:#222;transform:scaleX(0.845);">Card Number</div>
<div class="t" style="left:78px;top:558.88px;font-size:7.2px;color:#222;transform:scaleX(0.860);">Active Card</div>
<div class="t" style="left:118px;top:558.88px;font-size:7.2px;color:#222;transform:scaleX(0.862);">Badge Type</div>
<div class="t" style="left:188px;top:558.88px;font-size:7.2px;color:#222;transform:scaleX(0.857);">Issue Date</div>
<div class="t" style="left:258px;top:558.88px;font-size:7.2px;color:#222;transform:scaleX(0.876);">Activation Date</div>
<div class="t" style="left:357.3px;top:558.88px;font-size:7.2px;color:#222;transform:scaleX(0.880);">Deactivation Date</div>
<div class="r" style="left:2px;top:568px;width:1118px;height:24px;background:#ababab;"></div>
<div class="r" style="left:0px;top:593px;width:1122px;height:13px;background:#f0f0f0;"></div>
<div class="r" style="left:0px;top:595px;width:556px;height:11px;box-sizing:border-box;background:#f0eeec;border:1px solid #d6d6d6;border-top-color:#c9c9c9;border-left:none;border-bottom-color:#c4c4c4;"></div>
<div class="r" style="left:557px;top:595px;width:556px;height:11px;box-sizing:border-box;background:#f0eeec;border:1px solid #d6d6d6;border-top-color:#c9c9c9;border-bottom-color:#c4c4c4;"></div>
<svg class="r" style="left:0px;top:606px" width="1122" height="25" viewBox="0 606 1122 25"><defs><linearGradient id="tbg" x1="0" y1="0" x2="1" y2="0"><stop offset="0" stop-color="#8ea8c4"/><stop offset="0.03" stop-color="#a2bcd8"/><stop offset="0.35" stop-color="#a9c4e2"/><stop offset="0.55" stop-color="#b3cdea"/><stop offset="0.75" stop-color="#a8c3e1"/><stop offset="1" stop-color="#9fb9d6"/></linearGradient><radialGradient id="orb" cx="0.5" cy="0.35" r="0.6"><stop offset="0" stop-color="#7fd0f0"/><stop offset="0.6" stop-color="#1f6fb0"/><stop offset="1" stop-color="#0a3f78"/></radialGradient></defs><rect x="0" y="607" width="1122" height="24" fill="url(#tbg)"/><rect x="0" y="607" width="32" height="24" fill="#8ba3bd" opacity=".8"/><rect x="0" y="607" width="1122" height="1" fill="#d8e4f0" opacity=".7"/><circle cx="15.6" cy="619.5" r="10.3" fill="url(#orb)" stroke="#4a6c8e" stroke-width="0.6"/><path d="M10.5 616 q2.5 -1.5 5 0 v3 q-2.5 -1.5 -5 0z" fill="#f05a24"/><path d="M16 616 q2.5 1.5 5 0 v3 q-2.5 1.5 -5 0z" fill="#8cc63e"/><path d="M10.5 619.5 q2.5 -1.5 5 0 v3 q-2.5 -1.5 -5 0z" fill="#1ea7e8"/><path d="M16 619.5 q2.5 1.5 5 0 v3 q-2.5 1.5 -5 0z" fill="#fbbc09"/><rect x="35" y="608.5" width="34" height="22.5" rx="1.5" fill="#c4d3e4" stroke="#8fa3b9" stroke-width="0.8"/><path d="M52.1 619.2 L45.00 615.10 A8.2 8.2 0 0 1 59.20 615.10Z" fill="#db4437"/><path d="M52.1 619.2 L59.20 615.10 A8.2 8.2 0 0 1 52.10 627.40Z" fill="#f4c20d"/><path d="M52.1 619.2 L52.10 627.40 A8.2 8.2 0 0 1 45.00 615.10Z" fill="#0f9d58"/><circle cx="52.1" cy="619.2" r="3.9" fill="#fff"/><circle cx="52.1" cy="619.2" r="3.0" fill="#4285f4"/><path d="M80 612.5 h6 l1.5 1.5 h10 v14 h-17.5z" fill="#e9c765"/><rect x="80" y="615.5" width="17.5" height="12.5" fill="#f6df8e"/><path d="M82 624 h13.5 v4 h-2.5 v-2 h-8.5 v2 h-2.5z" fill="#7ec4e8"/><rect x="82.5" y="612.8" width="2" height="2" fill="#6cb33e"/><rect x="86" y="613.5" width="2" height="2" fill="#d14b3a"/><rect x="89.5" y="613.5" width="2" height="2" fill="#4a90d0"/><rect x="116.5" y="611" width="15" height="16" fill="#c9dff0" stroke="#8db4d4" stroke-width="0.6"/><circle cx="123" cy="619" r="5.6" fill="#f08a1c" stroke="#fff" stroke-width="1"/><path d="M121.2 616 L126 619 L121.2 622Z" fill="#fff"/><rect x="159" y="611" width="10.5" height="16" fill="#f4f7fb" stroke="#6a8fc0" stroke-width="0.6"/><path d="M160.5 614h7.5M160.5 616.5h7.5M160.5 619h7.5M160.5 621.5h7.5M160.5 624h7.5" stroke="#2b5797" stroke-width="0.8"/><path d="M151.5 612.5 L162 610.5 V628.5 L151.5 626.5Z" fill="#2b579a"/><text x="152.6" y="623" font-family="Liberation Sans" font-weight="bold" font-size="8" fill="#fff">W</text><circle cx="196.7" cy="619" r="7" fill="none" stroke="#2a9fe0" stroke-width="3"/><rect x="190" y="618.2" width="13" height="2.2" fill="#2a9fe0"/><rect x="197" y="620.6" width="8" height="2.4" fill="#a9c4e2"/><path d="M188 625 Q192 611 206 610.5" fill="none" stroke="#f3c614" stroke-width="1.6"/><rect x="226" y="610.5" width="14" height="17.5" rx="1" fill="#dfe7f0" stroke="#7f95ad" stroke-width="0.7"/><rect x="228" y="612.5" width="10" height="4" fill="#f6f6f6" stroke="#e6a030" stroke-width="0.6"/><rect x="228.0" y="618.5" width="2.4" height="2" fill="#8ea6c0"/><rect x="231.5" y="618.5" width="2.4" height="2" fill="#8ea6c0"/><rect x="235.0" y="618.5" width="2.4" height="2" fill="#8ea6c0"/><rect x="228.0" y="621.5" width="2.4" height="2" fill="#8ea6c0"/><rect x="231.5" y="621.5" width="2.4" height="2" fill="#8ea6c0"/><rect x="235.0" y="621.5" width="2.4" height="2" fill="#8ea6c0"/><rect x="228.0" y="624.5" width="2.4" height="2" fill="#8ea6c0"/><rect x="231.5" y="624.5" width="2.4" height="2" fill="#8ea6c0"/><rect x="235.0" y="624.5" width="2.4" height="2" fill="#8ea6c0"/><rect x="252.5" y="607.5" width="34" height="23.5" rx="1.5" fill="#d9e4ef" stroke="#8fa3b9" stroke-width="0.8"/><path d="M261 612.5 L269.5 609.8 L278 612.5 V626 L269.5 628.8 L261 626Z" fill="#1b2a52"/><path d="M262.5 613.5 L268.6 611.8 V627.2 L262.5 625.2Z" fill="#6fa8dc"/><path d="M270.4 611.8 L276.5 613.5 V625.2 L270.4 627.2Z" fill="#5b95cc"/><path d="M269.5 612 q-2 3 0 6 q2 3 0 8" stroke="#fff" stroke-width="1.2" fill="none"/><rect x="305" y="611" width="10.5" height="16" fill="#f4f8f4" stroke="#5b9a68" stroke-width="0.6"/><path d="M306 614h8.5M306 617h8.5M306 620h8.5M306 623h8.5M309.5 612v14" stroke="#2f7d4a" stroke-width="0.7"/><path d="M297 612.5 L308 610.5 V628.5 L297 626.5Z" fill="#1e7145"/><text x="298.6" y="623" font-family="Liberation Sans" font-weight="bold" font-size="8" fill="#fff">X</text><rect x="1022" y="607" width="90" height="24" fill="#93adc9" opacity=".55"/><path d="M1032 622 L1034.5 619.5 L1037 622Z" fill="#f4f8fc"/><path d="M1044 617 h2 l3 -2.5 v9 l-3 -2.5 h-2z" fill="#f4f8fc" stroke="#555" stroke-width="0.4"/><path d="M1050.5 616.5 q1.5 2.5 0 5 M1052.5 615.5 q2.5 3.5 0 7" stroke="#f4f8fc" stroke-width="0.9" fill="none"/><rect x="1060" y="616" width="7.5" height="6" fill="#5a6470" stroke="#f4f8fc" stroke-width="0.8"/><rect x="1061.5" y="622.5" width="5" height="1.5" fill="#f4f8fc"/><rect x="1059" y="614.5" width="2" height="2" fill="#f4f8fc"/><text x="1079" y="617.5" font-family="Liberation Sans" font-size="8.2" fill="#ffffff" textLength="28" lengthAdjust="spacingAndGlyphs">12:45 PM</text><text x="1077" y="627.5" font-family="Liberation Sans" font-size="8.2" fill="#ffffff" textLength="30" lengthAdjust="spacingAndGlyphs">9/18/2017</text><rect x="1114" y="607" width="8" height="24" fill="#a9c0da" stroke="#7f97b2" stroke-width="0.6"/></svg>
</body></html>
